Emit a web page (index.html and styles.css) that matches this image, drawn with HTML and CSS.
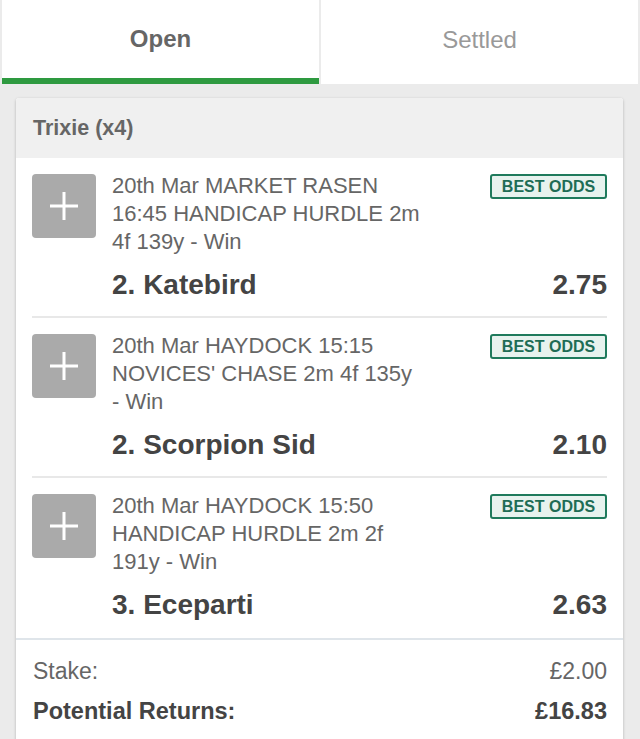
FILE: index.html
```html
<!DOCTYPE html>
<html>
<head>
<meta charset="utf-8">
<link rel="stylesheet" href="styles.css">
</head>
<body>
<div class="tabs">
  <div class="tab active">Open</div>
  <div class="tab">Settled</div>
</div>
<div class="card">
  <div class="card-head">Trixie (x4)</div>
  <div class="legs">
    <div class="leg">
      <div class="plus"><svg width="30" height="30" viewBox="0 0 30 30"><path d="M15 1v28M1 15h28" stroke="#fff" stroke-width="3"/></svg></div>
      <div class="leg-body">
        <div class="leg-top">
          <div class="event">20th Mar MARKET RASEN 16:45 HANDICAP HURDLE 2m 4f 139y - Win</div>
          <div class="badge">BEST ODDS</div>
        </div>
        <div class="sel"><span>2. Katebird</span><span>2.75</span></div>
      </div>
    </div>
    <div class="leg">
      <div class="plus"><svg width="30" height="30" viewBox="0 0 30 30"><path d="M15 1v28M1 15h28" stroke="#fff" stroke-width="3"/></svg></div>
      <div class="leg-body">
        <div class="leg-top">
          <div class="event">20th Mar HAYDOCK 15:15 NOVICES' CHASE 2m 4f 135y - Win</div>
          <div class="badge">BEST ODDS</div>
        </div>
        <div class="sel"><span>2. Scorpion Sid</span><span>2.10</span></div>
      </div>
    </div>
    <div class="leg">
      <div class="plus"><svg width="30" height="30" viewBox="0 0 30 30"><path d="M15 1v28M1 15h28" stroke="#fff" stroke-width="3"/></svg></div>
      <div class="leg-body">
        <div class="leg-top">
          <div class="event">20th Mar HAYDOCK 15:50 HANDICAP HURDLE 2m 2f 191y - Win</div>
          <div class="badge">BEST ODDS</div>
        </div>
        <div class="sel"><span>3. Eceparti</span><span>2.63</span></div>
      </div>
    </div>
  </div>
  <div class="foot">
    <div class="foot-row"><span>Stake:</span><span>£2.00</span></div>
    <div class="foot-row strong"><span>Potential Returns:</span><span>£16.83</span></div>
  </div>
</div>
</body>
</html>
```
FILE: styles.css
```css
* { box-sizing: border-box; }
html, body { margin: 0; padding: 0; }
body {
  background: #ebebeb;
  font-family: "Liberation Sans", Arial, sans-serif;
  width: 640px;
  height: 739px;
  overflow: hidden;
}
.tabs {
  display: flex;
  gap: 2px;
  padding: 0 2px;
}
.tab {
  flex: 1;
  height: 84px;
  background: #fff;
  display: flex;
  align-items: center;
  justify-content: center;
  padding-bottom: 4px;
  font-size: 24px;
  color: #999;
}
.tab.active {
  color: #666;
  font-weight: bold;
  border-bottom: 6px solid #2e9a40;
  padding-bottom: 0;
}
.card {
  margin: 14px 17px 0 16px;
  background: #fff;
  border-radius: 3px;
  box-shadow: 0 1px 3px rgba(0,0,0,0.25);
  overflow: hidden;
}
.card-head {
  height: 60px;
  background: #f0f0f0;
  display: flex;
  align-items: center;
  padding-left: 17px;
  font-size: 21.5px;
  font-weight: bold;
  color: #666;
}
.legs { padding: 0 16px; }
.leg {
  display: flex;
  gap: 16px;
  padding: 14px 0 16px;
  border-bottom: 2px solid #e8e8e8;
}
.leg:last-child { border-bottom: none; padding-bottom: 18px; }
.plus {
  flex: 0 0 64px;
  width: 64px;
  height: 64px;
  margin-top: 2px;
  background: #aaa;
  border-radius: 4px;
  display: flex;
  align-items: center;
  justify-content: center;
}
.leg-body { flex: 1; }
.leg-top {
  display: flex;
  justify-content: space-between;
  align-items: flex-start;
}
.event {
  width: 310px;
  font-size: 22px;
  line-height: 28px;
  color: #666;
}
.badge {
  margin-top: 2px;
  width: 117px;
  height: 25px;
  border: 2px solid #1f7a5c;
  border-radius: 3px;
  background: #e7f2ee;
  color: #1e6c55;
  font-size: 16px;
  font-weight: bold;
  display: flex;
  align-items: center;
  justify-content: center;
}
.sel {
  margin-top: 14px;
  display: flex;
  justify-content: space-between;
  font-size: 28px;
  line-height: 30px;
  font-weight: bold;
  color: #444;
}
.foot {
  border-top: 2px solid #dfe5ea;
  padding: 11px 16px 14px 17px;
}
.foot-row {
  display: flex;
  justify-content: space-between;
  font-size: 23px;
  line-height: 40px;
  color: #666;
}
.foot-row.strong {
  font-size: 23.5px;
  font-weight: bold;
  color: #444;
}
```
